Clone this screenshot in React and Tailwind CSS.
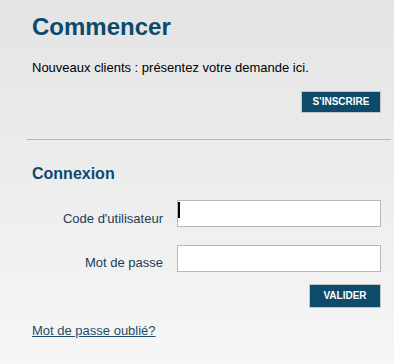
export default function App() {
    return (
        <div className="min-h-[364px] bg-gradient-to-b from-[#e4e4e4] to-[#f6f6f6] font-['Liberation_Sans',Arial,sans-serif]">
            {/* Commencer */}
            <div className="pl-8 pr-[13px] pt-[13px]">
                <h1 className="text-[24px] leading-[28px] font-bold text-[#0c4a6c]">Commencer</h1>
                <p className="mt-[19px] text-[13px] leading-4 text-black">
                    Nouveaux clients : présentez votre demande ici.
                </p>
                <div className="flex justify-end mt-[15px]">
                    <button className="h-[22px] w-[80px] border border-[#c4c8ca] bg-[#0e4b6a] text-white text-[10px] font-bold leading-none">
                        S'INSCRIRE
                    </button>
                </div>
            </div>

            <div className="mt-[26px] ml-[27px] mr-[3px] h-px bg-[#a3c0c7]" />

            {/* Connexion */}
            <div className="pl-8 pr-[13px]">
                <h2 className="mt-[24px] text-[16px] leading-5 font-bold text-[#0c4a6c]">Connexion</h2>

                <div className="mt-[16px] flex items-end gap-[14px]">
                    <label className="w-[131px] shrink-0 text-right text-[13px] leading-4 text-[#1b3d55]">Code d'utilisateur</label>
                    <div className="relative flex-1 min-w-0">
                        <input type="text" className="block w-full h-[27px] border border-[#b8b8b8] bg-white outline-none" />
                        <span className="absolute left-[1px] top-[2px] h-4 w-[2px] bg-black" />
                    </div>
                </div>

                <div className="mt-[18px] flex items-end gap-[14px]">
                    <label className="w-[131px] shrink-0 pb-px text-right text-[13px] leading-4 text-[#1b3d55]">Mot de passe</label>
                    <input type="password" className="block flex-1 min-w-0 h-[27px] border border-[#b8b8b8] bg-white outline-none" />
                </div>

                <div className="flex justify-end mt-[12px]">
                    <button className="h-[24px] w-[72px] border border-[#c4c8ca] bg-[#0e4b6a] text-white text-[10px] font-bold leading-none">
                        VALIDER
                    </button>
                </div>

                <a href="#" className="block mt-[15px] w-fit text-[13px] leading-4 text-[#1d4e6e] underline">
                    Mot de passe oublié?
                </a>
            </div>
        </div>
    );
}
